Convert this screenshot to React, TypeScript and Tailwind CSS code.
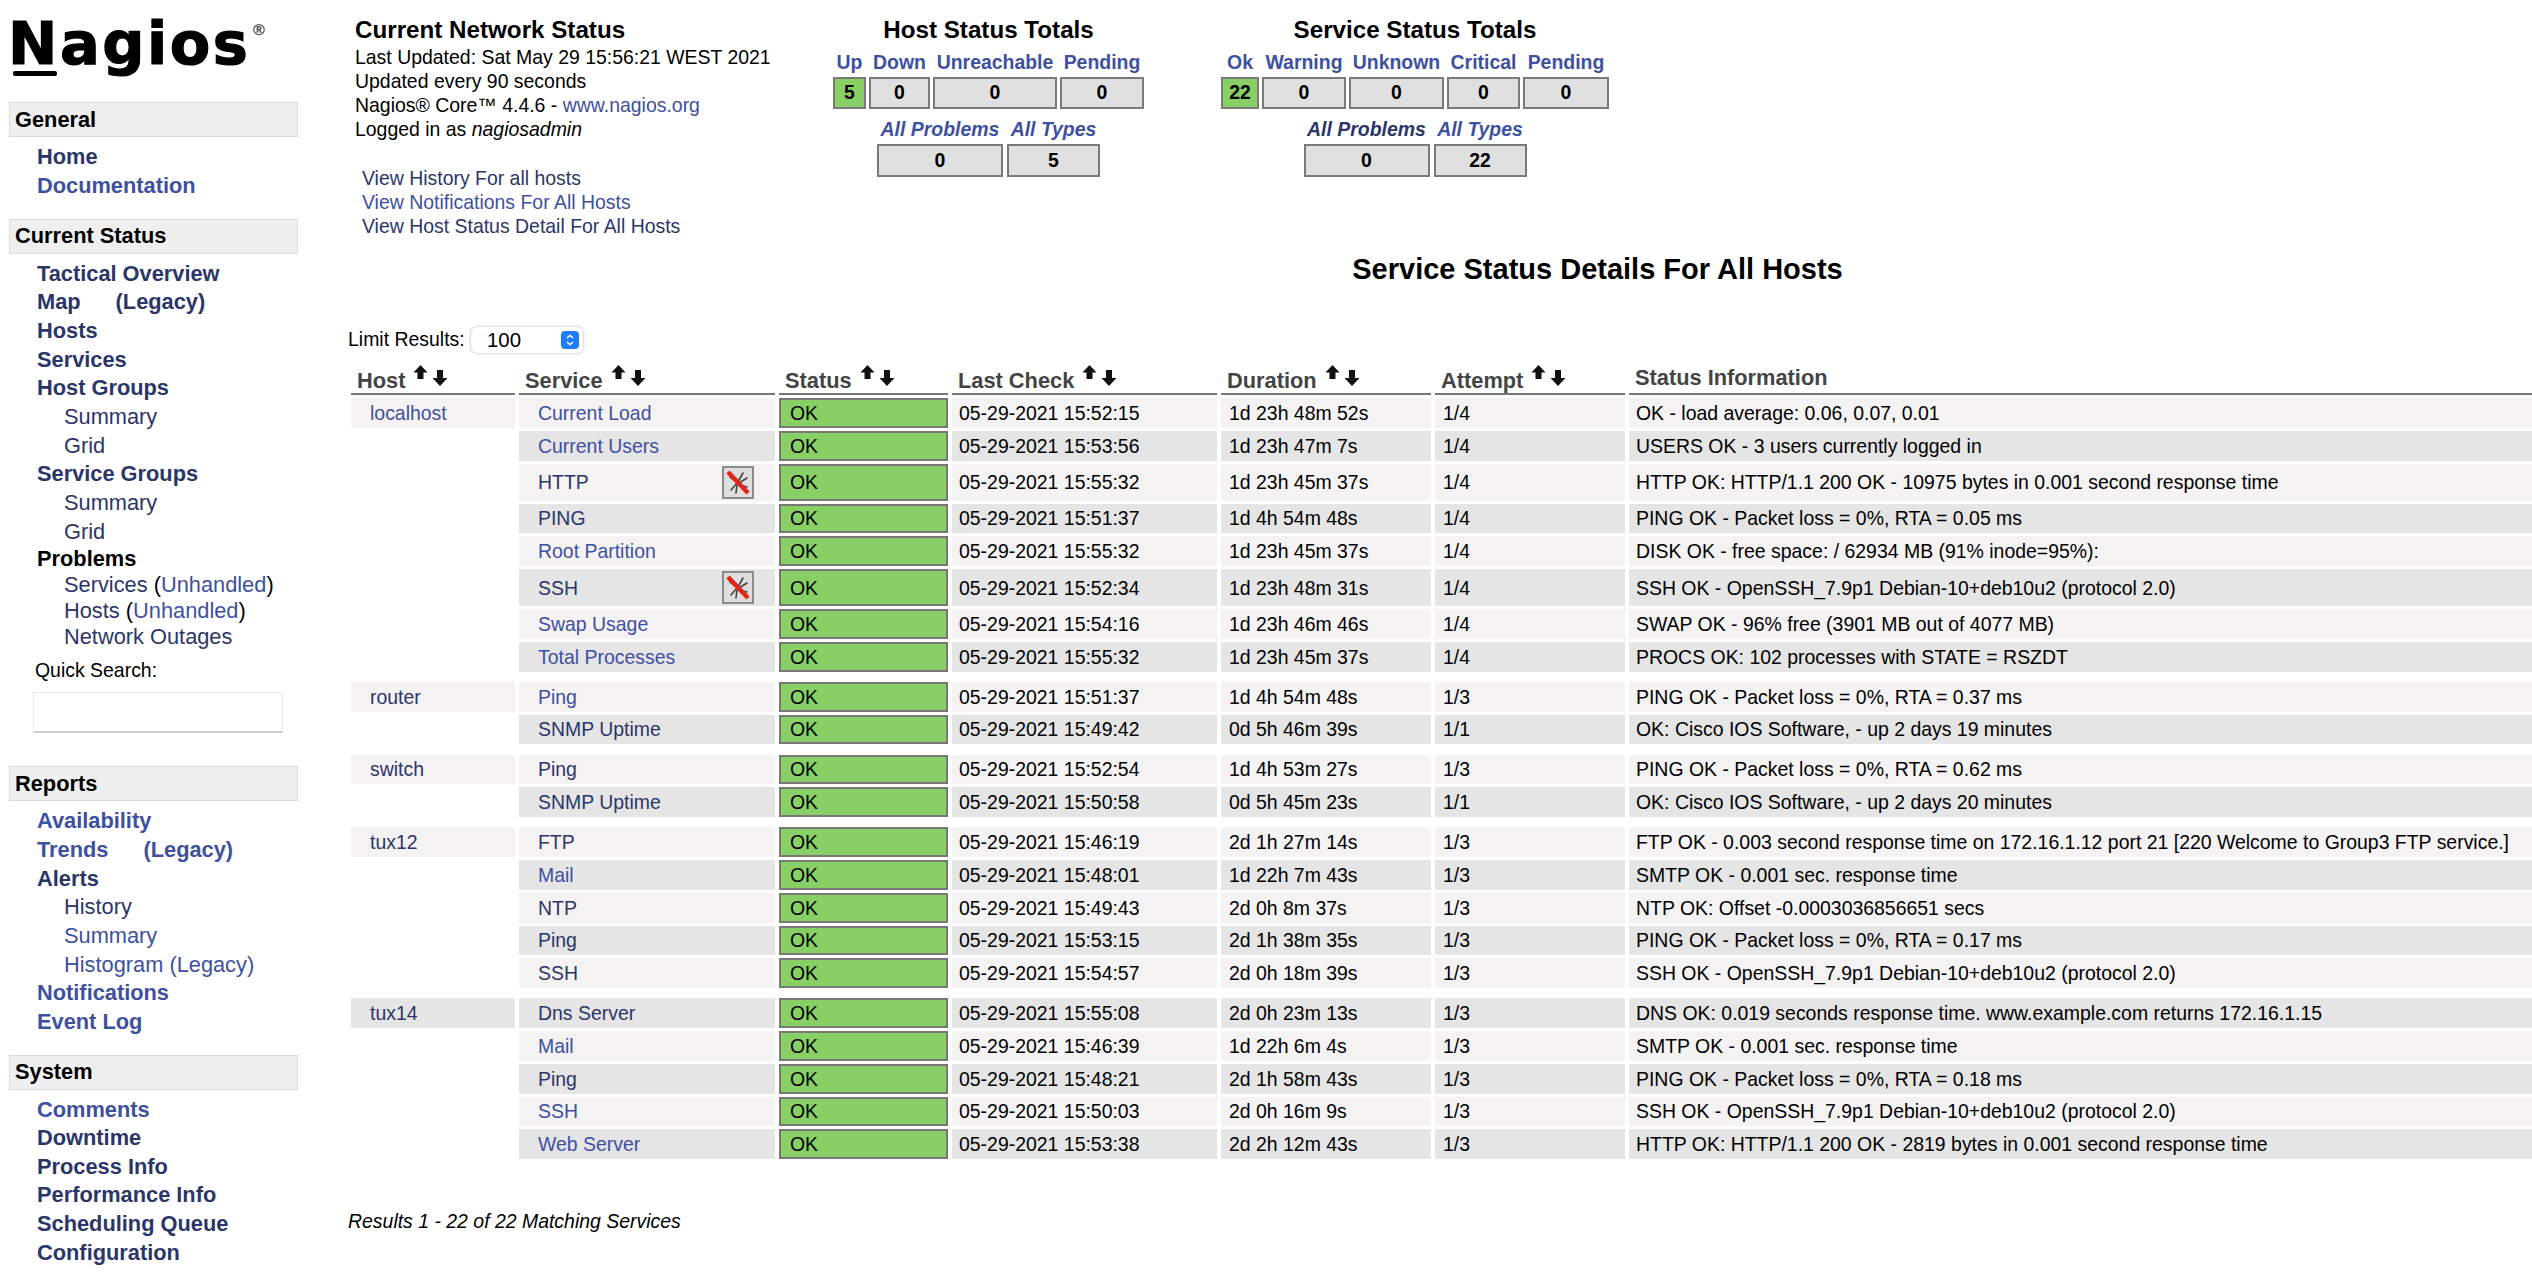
import React from "react";

const D = "text-[#2b3668]";
const L = "text-[#3e50a0]";

function Head({ children }: { children: React.ReactNode }) {
  return (
    <div className="h-[35px] w-[289px] ml-[9px] bg-[#efefef] border border-[#dcdcdc] pl-[5px] pt-[1px] flex items-center font-bold text-[21.8px] text-black">
      {children}
    </div>
  );
}
function Nav({ c, children }: { c: string; children: React.ReactNode }) {
  return <div className={`h-[28.67px] leading-[28.67px] pl-[37px] font-bold text-[21.8px] ${c}`}>{children}</div>;
}
function Sub({ c, children }: { c: string; children: React.ReactNode }) {
  return <div className={`h-[28.67px] leading-[28.67px] pl-[64px] text-[21.8px] ${c}`}>{children}</div>;
}
function Sub2({ children }: { children: React.ReactNode }) {
  return <div className={`h-[26px] leading-[26px] pl-[64px] text-[21.8px] text-black`}>{children}</div>;
}

function Logo() {
  return (
    <div className="h-[102px] pl-[8px] pt-[9px]">
      <div className="relative w-[265px] h-[80px] font-['DejaVu_Sans',sans-serif] font-bold text-[59px] leading-[70px] tracking-[2.5px] text-black [-webkit-text-stroke:1.2px_black] blur-[0.5px]">
        Nagios
        <span className="absolute left-[243px] top-[12px] text-[16px] leading-[18px] tracking-normal text-[#555] [-webkit-text-stroke:0px]">®</span>
        <span className="absolute left-[5px] top-[62px] w-[44px] h-[5px] bg-black rounded-[2px]" />
      </div>
    </div>
  );
}

function Sidebar() {
  return (
    <aside className="w-[340px] shrink-0">
      <Logo />
      <Head>General</Head>
      <div className="pt-[6px]">
        <Nav c={D}>Home</Nav>
        <Nav c={L}>Documentation</Nav>
      </div>
      <div className="h-[18.4px]" />
      <Head>Current Status</Head>
      <div className="pt-[6px]">
        <Nav c={D}>Tactical Overview</Nav>
        <Nav c={D}>Map<span className="ml-[35px]">(Legacy)</span></Nav>
        <Nav c={D}>Hosts</Nav>
        <Nav c={D}>Services</Nav>
        <Nav c={D}>Host Groups</Nav>
        <Sub c={D}>Summary</Sub>
        <Sub c={D}>Grid</Sub>
        <Nav c={D}>Service Groups</Nav>
        <Sub c={D}>Summary</Sub>
        <Sub c={D}>Grid</Sub>
        <div className="h-[26px] leading-[26px] pl-[37px] font-bold text-[21.8px] text-black">Problems</div>
        <Sub2><span className={D}>Services</span> (<span className={L}>Unhandled</span>)</Sub2>
        <Sub2><span className={D}>Hosts</span> (<span className={L}>Unhandled</span>)</Sub2>
        <Sub2><span className={D}>Network Outages</span></Sub2>
      </div>
      <div className="mt-[7px] h-[26px] leading-[26px] pl-[35px] text-[19.45px] text-black">Quick Search:</div>
      <div className="mt-[9px] ml-[33px] w-[250px] h-[41px] bg-white border border-[#e8e8e8] border-b-2 border-b-[#cccccc]" />
      <div className="h-[33px]" />
      <Head>Reports</Head>
      <div className="pt-[6px]">
        <Nav c={L}>Availability</Nav>
        <Nav c={L}>Trends<span className="ml-[35px]">(Legacy)</span></Nav>
        <Nav c={D}>Alerts</Nav>
        <Sub c={D}>History</Sub>
        <Sub c={L}>Summary</Sub>
        <Sub c={L}>Histogram (Legacy)</Sub>
        <Nav c={L}>Notifications</Nav>
        <Nav c={L}>Event Log</Nav>
      </div>
      <div className="h-[18px]" />
      <Head>System</Head>
      <div className="pt-[6px]">
        <Nav c={L}>Comments</Nav>
        <Nav c={D}>Downtime</Nav>
        <Nav c={D}>Process Info</Nav>
        <Nav c={D}>Performance Info</Nav>
        <Nav c={D}>Scheduling Queue</Nav>
        <Nav c={D}>Configuration</Nav>
      </div>
    </aside>
  );
}

function TotalCell({ w, label, value, green, italic, c = L }: { w: string; label: string; value: string; green?: boolean; italic?: boolean; c?: string }) {
  return (
    <div className={`${w} flex flex-col items-center`}>
      <div className={`h-[24px] leading-[24px] font-bold text-[19.45px] whitespace-nowrap ${c} ${italic ? "italic" : ""}`}>{label}</div>
      <div className={`mt-[3px] w-full ${italic ? "h-[33px]" : "h-[32px]"} border-2 border-[#7a7a7a] flex items-center justify-center font-bold text-[19.45px] text-black ${green ? "bg-[#88d066]" : "bg-[#e0e0e0]"}`}>
        {value}
      </div>
    </div>
  );
}

function Totals() {
  return (
    <>
      <div className="w-[311px] ml-[1px] pt-[18px]">
        <div className="h-[24px] leading-[24px] text-center font-bold text-[24.2px] text-black">Host Status Totals</div>
        <div className="mt-[8px] flex gap-[3px]">
          <TotalCell w="w-[33px]" label="Up" value="5" green />
          <TotalCell w="w-[61px]" label="Down" value="0" />
          <TotalCell w="w-[124px]" label="Unreachable" value="0" />
          <TotalCell w="w-[84px]" label="Pending" value="0" />
        </div>
        <div className="mt-[8px] flex justify-center gap-[4px]">
          <TotalCell w="w-[126px]" label="All Problems" value="0" italic />
          <TotalCell w="w-[93px]" label="All Types" value="5" italic />
        </div>
      </div>
      <div className="w-[388px] ml-[77px] pt-[18px]">
        <div className="h-[24px] leading-[24px] text-center font-bold text-[24.2px] text-black">Service Status Totals</div>
        <div className="mt-[8px] flex gap-[3px]">
          <TotalCell w="w-[38px]" label="Ok" value="22" green />
          <TotalCell w="w-[84px]" label="Warning" value="0" />
          <TotalCell w="w-[95px]" label="Unknown" value="0" />
          <TotalCell w="w-[73px]" label="Critical" value="0" />
          <TotalCell w="w-[86px]" label="Pending" value="0" />
        </div>
        <div className="mt-[8px] flex justify-center gap-[4px]">
          <TotalCell w="w-[126px]" label="All Problems" value="0" italic c={D} />
          <TotalCell w="w-[93px]" label="All Types" value="22" italic />
        </div>
      </div>
    </>
  );
}

function Up() {
  return (
    <svg width="15" height="15" viewBox="0 0 15 15" className="ml-[8px] shrink-0 blur-[0.3px]">
      <polygon points="7.5,0 14.5,7.5 10.5,7.5 10.5,14 4.5,14 4.5,7.5 0.5,7.5" fill="#111" />
    </svg>
  );
}
function Down() {
  return (
    <svg width="16" height="16" viewBox="0 0 16 16" className="ml-[4px] mt-[5px] shrink-0 blur-[0.3px]">
      <polygon points="5,0 11,0 11,8 15.5,8 8,16 0.5,8 5,8" fill="#111" />
    </svg>
  );
}

function Th({ w, label }: { w: string; label: string }) {
  return (
    <th className={`${w} h-[30px] p-0 pl-[6px] align-top text-left border-b-2 border-[#777777]`}>
      <div className="flex">
        <span className="mt-[4px] leading-[24px] text-[21.8px] font-bold text-[#444444]">{label}</span>
        <Up />
        <Down />
      </div>
    </th>
  );
}

function NoNotify() {
  return (
    <svg width="32" height="33" viewBox="0 0 32 33" className="shrink-0 blur-[0.4px]">
      <rect x="1" y="1" width="30" height="31" fill="#dedede" stroke="#8a8a8a" strokeWidth="2" />
      <g stroke="#444" strokeWidth="1.6" strokeLinecap="round" fill="none">
        <path d="M15 17 L9 24" />
        <path d="M16 16 L21 7" />
        <path d="M17 17 L25 12" />
        <path d="M15 19 L14 27" />
        <path d="M12 14 L8 11" />
        <path d="M18 19 L25 21" />
      </g>
      <path d="M6 6 L26 27" stroke="#e0261b" strokeWidth="4.5" />
    </svg>
  );
}

type Group = { host: string; hostC: string; hostDark?: boolean; start: boolean; rows: { s: string; c: string; t: string; d: string; a: string; i: string; icon?: boolean }[] };

const groups: Group[] = [
  {
    host: "localhost", hostC: L, start: true,
    rows: [
      { s: "Current Load", c: L, t: "05-29-2021 15:52:15", d: "1d 23h 48m 52s", a: "1/4", i: "OK - load average: 0.06, 0.07, 0.01" },
      { s: "Current Users", c: L, t: "05-29-2021 15:53:56", d: "1d 23h 47m 7s", a: "1/4", i: "USERS OK - 3 users currently logged in" },
      { s: "HTTP", c: D, t: "05-29-2021 15:55:32", d: "1d 23h 45m 37s", a: "1/4", i: "HTTP OK: HTTP/1.1 200 OK - 10975 bytes in 0.001 second response time", icon: true },
      { s: "PING", c: D, t: "05-29-2021 15:51:37", d: "1d 4h 54m 48s", a: "1/4", i: "PING OK - Packet loss = 0%, RTA = 0.05 ms" },
      { s: "Root Partition", c: L, t: "05-29-2021 15:55:32", d: "1d 23h 45m 37s", a: "1/4", i: "DISK OK - free space: / 62934 MB (91% inode=95%):" },
      { s: "SSH", c: D, t: "05-29-2021 15:52:34", d: "1d 23h 48m 31s", a: "1/4", i: "SSH OK - OpenSSH_7.9p1 Debian-10+deb10u2 (protocol 2.0)", icon: true },
      { s: "Swap Usage", c: L, t: "05-29-2021 15:54:16", d: "1d 23h 46m 46s", a: "1/4", i: "SWAP OK - 96% free (3901 MB out of 4077 MB)" },
      { s: "Total Processes", c: L, t: "05-29-2021 15:55:32", d: "1d 23h 45m 37s", a: "1/4", i: "PROCS OK: 102 processes with STATE = RSZDT" },
    ],
  },
  {
    host: "router", hostC: D, start: true,
    rows: [
      { s: "Ping", c: L, t: "05-29-2021 15:51:37", d: "1d 4h 54m 48s", a: "1/3", i: "PING OK - Packet loss = 0%, RTA = 0.37 ms" },
      { s: "SNMP Uptime", c: D, t: "05-29-2021 15:49:42", d: "0d 5h 46m 39s", a: "1/1", i: "OK: Cisco IOS Software, - up 2 days 19 minutes" },
    ],
  },
  {
    host: "switch", hostC: D, start: true,
    rows: [
      { s: "Ping", c: D, t: "05-29-2021 15:52:54", d: "1d 4h 53m 27s", a: "1/3", i: "PING OK - Packet loss = 0%, RTA = 0.62 ms" },
      { s: "SNMP Uptime", c: D, t: "05-29-2021 15:50:58", d: "0d 5h 45m 23s", a: "1/1", i: "OK: Cisco IOS Software, - up 2 days 20 minutes" },
    ],
  },
  {
    host: "tux12", hostC: D, start: true,
    rows: [
      { s: "FTP", c: D, t: "05-29-2021 15:46:19", d: "2d 1h 27m 14s", a: "1/3", i: "FTP OK - 0.003 second response time on 172.16.1.12 port 21 [220 Welcome to Group3 FTP service.]" },
      { s: "Mail", c: L, t: "05-29-2021 15:48:01", d: "1d 22h 7m 43s", a: "1/3", i: "SMTP OK - 0.001 sec. response time" },
      { s: "NTP", c: D, t: "05-29-2021 15:49:43", d: "2d 0h 8m 37s", a: "1/3", i: "NTP OK: Offset -0.0003036856651 secs" },
      { s: "Ping", c: D, t: "05-29-2021 15:53:15", d: "2d 1h 38m 35s", a: "1/3", i: "PING OK - Packet loss = 0%, RTA = 0.17 ms" },
      { s: "SSH", c: D, t: "05-29-2021 15:54:57", d: "2d 0h 18m 39s", a: "1/3", i: "SSH OK - OpenSSH_7.9p1 Debian-10+deb10u2 (protocol 2.0)" },
    ],
  },
  {
    host: "tux14", hostC: D, hostDark: true, start: false,
    rows: [
      { s: "Dns Server", c: D, t: "05-29-2021 15:55:08", d: "2d 0h 23m 13s", a: "1/3", i: "DNS OK: 0.019 seconds response time. www.example.com returns 172.16.1.15" },
      { s: "Mail", c: L, t: "05-29-2021 15:46:39", d: "1d 22h 6m 4s", a: "1/3", i: "SMTP OK - 0.001 sec. response time" },
      { s: "Ping", c: D, t: "05-29-2021 15:48:21", d: "2d 1h 58m 43s", a: "1/3", i: "PING OK - Packet loss = 0%, RTA = 0.18 ms" },
      { s: "SSH", c: L, t: "05-29-2021 15:50:03", d: "2d 0h 16m 9s", a: "1/3", i: "SSH OK - OpenSSH_7.9p1 Debian-10+deb10u2 (protocol 2.0)" },
      { s: "Web Server", c: L, t: "05-29-2021 15:53:38", d: "2d 2h 12m 43s", a: "1/3", i: "HTTP OK: HTTP/1.1 200 OK - 2819 bytes in 0.001 second response time" },
    ],
  },
];

function ServiceTable() {
  return (
    <table className="mt-[9px] ml-[7px] w-[2190px] table-fixed border-separate [border-spacing:4px_3px] text-[19.45px] leading-[22px] text-black">
      <thead>
        <tr>
          <Th w="w-[164px]" label="Host" />
          <Th w="w-[256px]" label="Service" />
          <Th w="w-[169px]" label="Status" />
          <Th w="w-[265px]" label="Last Check" />
          <Th w="w-[210px]" label="Duration" />
          <Th w="w-[190px]" label="Attempt" />
          <th className="h-[30px] p-0 pl-[6px] align-top text-left border-b-2 border-[#777777]">
            <span className="block leading-[24px] pt-[1px] text-[21.8px] font-bold text-[#444444]">Status Information</span>
          </th>
        </tr>
      </thead>
      <tbody>
        {groups.map((g, gi) => (
          <React.Fragment key={g.host}>
            {gi > 0 && (
              <tr>
                <td colSpan={7} className="h-[4.25px] p-0" />
              </tr>
            )}
            {g.rows.map((r, ri) => {
              const bg = (g.start ? ri % 2 === 0 : ri % 2 === 1) ? "bg-[#f4f2f3]" : "bg-[#e5e5e5]";
              const h = r.icon ? "h-[37px]" : "h-[29.75px]";
              return (
                <tr key={ri}>
                  <td className={`${h} p-0 pl-[19px] ${ri === 0 ? `${g.hostDark ? "bg-[#e5e5e5]" : "bg-[#f4f2f3]"} ${g.hostC}` : ""}`}>{ri === 0 ? g.host : ""}</td>
                  <td className={`${h} p-0 pl-[19px] pr-[21px] ${bg} ${r.c}`}>
                    <div className="flex items-center justify-between">
                      <span>{r.s}</span>
                      {r.icon && <NoNotify />}
                    </div>
                  </td>
                  <td className={`${h} p-0 pl-[9px] bg-[#88d066] border-2 border-[#777777]`}>OK</td>
                  <td className={`${h} p-0 pl-[7px] ${bg}`}>{r.t}</td>
                  <td className={`${h} p-0 pl-[8px] ${bg}`}>{r.d}</td>
                  <td className={`${h} p-0 pl-[8px] ${bg}`}>{r.a}</td>
                  <td className={`${h} p-0 pl-[7px] whitespace-nowrap ${bg}`}>{r.i}</td>
                </tr>
              );
            })}
          </React.Fragment>
        ))}
      </tbody>
    </table>
  );
}

export default function App() {
  return (
    <div className="flex w-full h-[1286px] overflow-hidden bg-white font-['Liberation_Sans',Arial,sans-serif]">
      <Sidebar />
      <main className="flex-1 min-w-0">
        <div className="flex">
          <div className="w-[477px] shrink-0 ml-[15px] pt-[18px] text-[19.45px] leading-[24px] text-black">
            <div className="h-[24px] font-bold text-[24.2px]">Current Network Status</div>
            <div className="mt-[3px]">Last Updated: Sat May 29 15:56:21 WEST 2021</div>
            <div>Updated every 90 seconds</div>
            <div>Nagios® Core™ 4.4.6 - <span className={L}>www.nagios.org</span></div>
            <div>Logged in as <i>nagiosadmin</i></div>
            <div className="mt-[25px] ml-[7px]">
              <div className={D}>View History For all hosts</div>
              <div className={L}>View Notifications For All Hosts</div>
              <div className={D}>View Host Status Detail For All Hosts</div>
            </div>
          </div>
          <Totals />
        </div>
        <div className="mt-[13px] pl-[323px] h-[36px] leading-[36px] text-center font-bold text-[29px] text-black">
          Service Status Details For All Hosts
        </div>
        <div className="mt-[40px] ml-[8px] h-[26px] flex items-center text-[19.45px] text-black">
          <span className="w-[123px]">Limit Results:</span>
          <div className="w-[112px] h-[26px] pl-[16px] pr-[4px] flex items-center justify-between bg-white rounded-[6px] shadow-[0_0_3px_rgba(0,0,0,0.35)] text-[20.4px]">
            <span>100</span>
            <svg width="18" height="18" viewBox="0 0 18 18">
              <rect width="18" height="18" rx="4" fill="#1d7ef5" />
              <path d="M6 7 L9 4.5 L12 7 M6 11 L9 13.5 L12 11" stroke="#fff" strokeWidth="1.6" fill="none" />
            </svg>
          </div>
        </div>
        <ServiceTable />
        <div className="mt-[47px] ml-[8px] leading-[24px] italic text-[19.45px] text-black">Results 1 - 22 of 22 Matching Services</div>
      </main>
    </div>
  );
}
